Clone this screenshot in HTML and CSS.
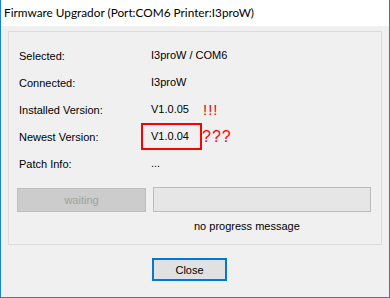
FILE: index.html
```html
<!DOCTYPE html>
<html lang="en">
<head>
    <meta charset="UTF-8">
    <title>Firmware Upgrador</title>
    <link rel="stylesheet" href="styles.css">
</head>
<body>
    <div class="window">
        <div class="title-bar">Firmware Upgrador (Port:COM6 Printer:I3proW)</div>

        <div class="group">
            <div class="row">
                <span class="label">Selected:</span>
                <span class="value">I3proW / COM6</span>
            </div>
            <div class="row">
                <span class="label">Connected:</span>
                <span class="value">I3proW</span>
            </div>
            <div class="row">
                <span class="label">Installed Version:</span>
                <span class="value version">V1.0.05</span>
                <span class="mark">!!!</span>
            </div>
            <div class="row">
                <span class="label">Newest Version:</span>
                <span class="value version marked">V1.0.04</span>
                <span class="mark big">???</span>
            </div>
            <div class="row">
                <span class="label">Patch Info:</span>
                <span class="value">...</span>
            </div>

            <div class="progress-row">
                <button class="wait-btn" disabled>waiting</button>
                <div class="progress-bar"></div>
            </div>
            <div class="progress-msg">no progress message</div>
        </div>

        <div class="footer">
            <button class="close-btn">Close</button>
        </div>
    </div>
</body>
</html>
```

FILE: styles.css
```css
body {
    margin: 0;
    padding: 0;
    font-family: "Liberation Sans", Arial, sans-serif;
    font-size: 11px;
    color: #000;
}
.window {
    width: 390px;
    height: 298px;
    box-sizing: border-box;
    border: 1px solid #1883d7;
    border-top: none;
    background-color: #f0f0f0;
}
.title-bar {
    height: 26px;
    line-height: 26px;
    background-color: #fff;
    padding-left: 3px;
    font-family: Lato, "Noto Sans", sans-serif;
    font-size: 11.8px;
    color: #000;
}
.group {
    margin: 5px 7px 0 7px;
    height: 214px;
    box-sizing: border-box;
    border: 1px solid #dcdcdc;
    padding: 10px 0 0 10px;
}
.row {
    display: flex;
    align-items: center;
    height: 27px;
}
.label {
    width: 122px;
}
.value {
    border: 2px solid transparent;
    padding: 0 8px;
    height: 23px;
    line-height: 23px;
}
.version {
    min-width: 41px;
}
.marked {
    border-color: #ff0000;
}
.mark {
    color: #ff0000;
    font-size: 15px;
    padding-left: 1px;
    letter-spacing: 1px;
}
.mark.big {
    font-size: 16px;
    padding-left: 0;
}
.progress-row {
    display: flex;
    gap: 7px;
    margin: 10px 0 0 -2px;
}
.wait-btn {
    width: 129px;
    height: 24px;
    margin-top: 1px;
    background-color: #cccccc;
    border: 1px solid #bfbfbf;
    color: #a0a0a0;
    font-family: "Liberation Sans", Arial, sans-serif;
    font-size: 11px;
    padding: 0;
}
.progress-bar {
    width: 218px;
    height: 25px;
    box-sizing: border-box;
    background-color: #e6e6e6;
    border: 1px solid #bcbcbc;
}
.progress-msg {
    margin: 8px 0 0 175px;
}
.footer {
    padding: 13px 0 0 151px;
}
.close-btn {
    width: 75px;
    height: 23px;
    background-color: #e1e1e1;
    border: 2px solid #0078d7;
    font-family: "Liberation Sans", Arial, sans-serif;
    font-size: 11px;
    color: #000;
    padding: 0;
}
```
